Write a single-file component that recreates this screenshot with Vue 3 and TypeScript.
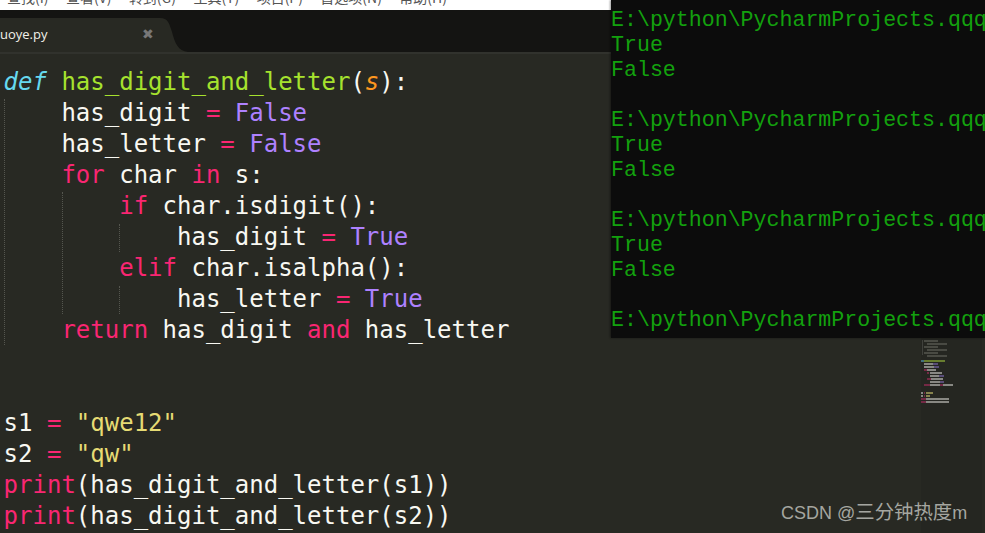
<script setup lang="ts">
type Tok = { t: string; c?: string };
const code: Tok[][] = [
  [{ t: 'def', c: 'def' }, { t: ' ' }, { t: 'has_digit_and_letter', c: 'fn' }, { t: '(' }, { t: 's', c: 'param' }, { t: '):' }],
  [{ t: '    has_digit ' }, { t: '=', c: 'kw' }, { t: ' ' }, { t: 'False', c: 'const' }],
  [{ t: '    has_letter ' }, { t: '=', c: 'kw' }, { t: ' ' }, { t: 'False', c: 'const' }],
  [{ t: '    ' }, { t: 'for', c: 'kw' }, { t: ' char ' }, { t: 'in', c: 'kw' }, { t: ' s:' }],
  [{ t: '        ' }, { t: 'if', c: 'kw' }, { t: ' char.isdigit():' }],
  [{ t: '            has_digit ' }, { t: '=', c: 'kw' }, { t: ' ' }, { t: 'True', c: 'const' }],
  [{ t: '        ' }, { t: 'elif', c: 'kw' }, { t: ' char.isalpha():' }],
  [{ t: '            has_letter ' }, { t: '=', c: 'kw' }, { t: ' ' }, { t: 'True', c: 'const' }],
  [{ t: '    ' }, { t: 'return', c: 'kw' }, { t: ' has_digit ' }, { t: 'and', c: 'kw' }, { t: ' has_letter' }],
  [],
  [],
  [{ t: 's1 ' }, { t: '=', c: 'kw' }, { t: ' ' }, { t: '"qwe12"', c: 'str' }],
  [{ t: 's2 ' }, { t: '=', c: 'kw' }, { t: ' ' }, { t: '"qw"', c: 'str' }],
  [{ t: 'print', c: 'kw' }, { t: '(has_digit_and_letter(s1))' }],
  [{ t: 'print', c: 'kw' }, { t: '(has_digit_and_letter(s2))' }],
];
const menus = ['查找(I)', '查看(V)', '转到(G)', '工具(T)', '项目(P)', '首选项(N)', '帮助(H)'];
const guides = [
  { left: 4, top: 45, height: 246 },
  { left: 62, top: 138, height: 122 },
  { left: 119, top: 170, height: 28 },
  { left: 119, top: 232, height: 28 },
];
const consoleLines = ['E:\\python\\PycharmProjects.qqq', 'True', 'False', '', 'E:\\python\\PycharmProjects.qqq', 'True', 'False', '', 'E:\\python\\PycharmProjects.qqq', 'True', 'False', '', 'E:\\python\\PycharmProjects.qqq'];
const W = '#a9a9a4', K = '#8f2b52', C = '#6b5a96', G = '#7f9a34', B = '#4c8a9c', Y = '#a8a25c', D = '#55564f';
const mini: [number, number, number, string][] = [
  [18, 3, 14, D], [21, 6, 20, D], [24, 3, 14, D], [27, 6, 20, D], [30, 3, 14, D], [33, 6, 20, D],
  [38, 0, 3, B], [38, 3, 21, G],
  [41, 3, 9, W], [41, 12, 5, C],
  [44, 3, 10, W], [44, 13, 5, C],
  [47, 3, 3, K], [47, 6, 9, W],
  [50, 6, 2, K], [50, 9, 12, W],
  [53, 9, 9, W], [53, 18, 5, C],
  [56, 6, 4, K], [56, 10, 12, W],
  [59, 9, 10, W], [59, 19, 4, C],
  [62, 3, 6, K], [62, 9, 10, W], [62, 19, 3, K], [62, 22, 10, W],
  [70, 0, 2, W], [70, 3, 1, K], [70, 5, 7, Y],
  [73, 0, 2, W], [73, 3, 1, K], [73, 5, 4, Y],
  [76, 0, 5, K], [76, 5, 23, W],
  [79, 0, 5, K], [79, 5, 23, W],
];
</script>

<template>
  <div class="page">
    <div class="menu">
      <span v-for="m in menus" :key="m" class="menu-item">{{ m }}</span>
    </div>
    <div class="tabbar">
      <div class="tab">
        <span class="tab-name">uoye.py</span>
        <span class="tab-close">✖</span>
      </div>
      <svg class="tab-edge" width="28" height="34" viewBox="0 0 28 34">
        <path d="M0 0 C8 0 9 5 12 14 C15 25 18 33 28 34 L0 34 Z" fill="#282923" />
      </svg>
    </div>
    <div class="editor">
      <div class="code">
        <div v-for="(line, i) in code" :key="i" class="line"><span v-for="(k, j) in line" :key="j" :class="k.c">{{ k.t }}</span></div>
      </div>
      <i v-for="(g, i) in guides" :key="i" class="guide" :style="{ left: g.left + 'px', top: g.top + 'px', height: g.height + 'px' }"></i>
      <div class="minimap">
        <div class="mini-content">
          <i class="mini-rule"></i>
          <i v-for="(s, i) in mini" :key="'m' + i" class="mini-seg" :style="{ top: s[0] + 'px', left: s[1] + 'px', width: s[2] + 'px', background: s[3] }"></i>
        </div>
      </div>
    </div>
    <div class="terminal">
      <div v-for="(l, i) in consoleLines" :key="i" class="term-line">{{ l }}</div>
    </div>
    <div class="watermark">CSDN @<span class="wm-cjk">三分钟热度</span>m</div>
  </div>
</template>

<style>
html, body { margin: 0; background: #282923; }
</style>

<style scoped>
.page {
  position: relative;
  width: 985px;
  height: 533px;
  overflow: hidden;
  display: flex;
  flex-direction: column;
  background: #282923;
}
.menu {
  flex: 0 0 10px;
  height: 10px;
  background: #fff;
  overflow: hidden;
  display: flex;
  gap: 17.4px;
  padding-left: 7px;
  font: 14px/14px "Noto Sans CJK SC", sans-serif;
  color: #555;
}
.menu-item { margin-top: -10px; white-space: nowrap; }
.tabbar {
  flex: 0 0 42px;
  height: 42px;
  background: #141412;
  display: flex;
  align-items: flex-end;
}
.tab {
  width: 160px;
  height: 34px;
  background: #282923;
  display: flex;
  align-items: center;
  box-sizing: border-box;
  padding-bottom: 2px;
  position: relative;
}
.tab-name {
  font: 13px "Open Sans", sans-serif;
  color: #f0f0ea;
}
.tab-close {
  position: absolute;
  left: 142px;
  top: 8px;
  font: 14px/16px "DejaVu Sans", sans-serif;
  color: #777;
}
.tab-edge { display: block; }
.editor {
  position: relative;
  flex: 1;
  border-top: 2px solid #31322d;
  box-sizing: border-box;
}
.code {
  padding: 13px 0 0 3.6px;
  font: 24px/31px "DejaVu Sans Mono", monospace;
  color: #f8f8f2;
  white-space: pre;
}
.line { height: 31px; }
.def { color: #66d9ef; font-style: italic; }
.fn { color: #a6e22e; }
.param { color: #fd971f; font-style: italic; }
.kw { color: #f92672; }
.const { color: #ae81ff; }
.str { color: #e6db74; }
.guide {
  position: absolute;
  width: 0;
  border-left: 1px dotted #55564f;
}
.minimap {
  position: absolute;
  left: 921px;
  top: 0;
  bottom: 0;
  width: 61px;
  background: rgba(0, 0, 0, 0.05);
}
.mini-content {
  position: absolute;
  left: 0;
  top: 268px;
  width: 61px;
  height: 100px;
  opacity: 0.75;
  filter: blur(0.5px);
}
.mini-rule {
  position: absolute;
  left: 1px;
  top: 18px;
  width: 1px;
  height: 15px;
  background: #4a4b45;
}
.mini-seg {
  position: absolute;
  height: 2px;
}
.terminal {
  position: absolute;
  left: 611px;
  top: 0;
  width: 374px;
  height: 338px;
  background: #0c0c0c;
  overflow: hidden;
  box-shadow: -1px 0 2px rgba(0, 0, 0, 0.4);
  font: 21.6px/25px "Liberation Mono", monospace;
  color: #13a10e;
  padding-top: 8px;
  box-sizing: border-box;
}
.term-line { height: 25px; white-space: pre; }
.watermark {
  position: absolute;
  left: 781px;
  top: 500px;
  font: 18px/24px "Liberation Sans", "Noto Sans CJK SC", sans-serif;
  color: #a5a6a0;
  white-space: nowrap;
}
.wm-cjk { font-size: 19.4px; }
</style>
